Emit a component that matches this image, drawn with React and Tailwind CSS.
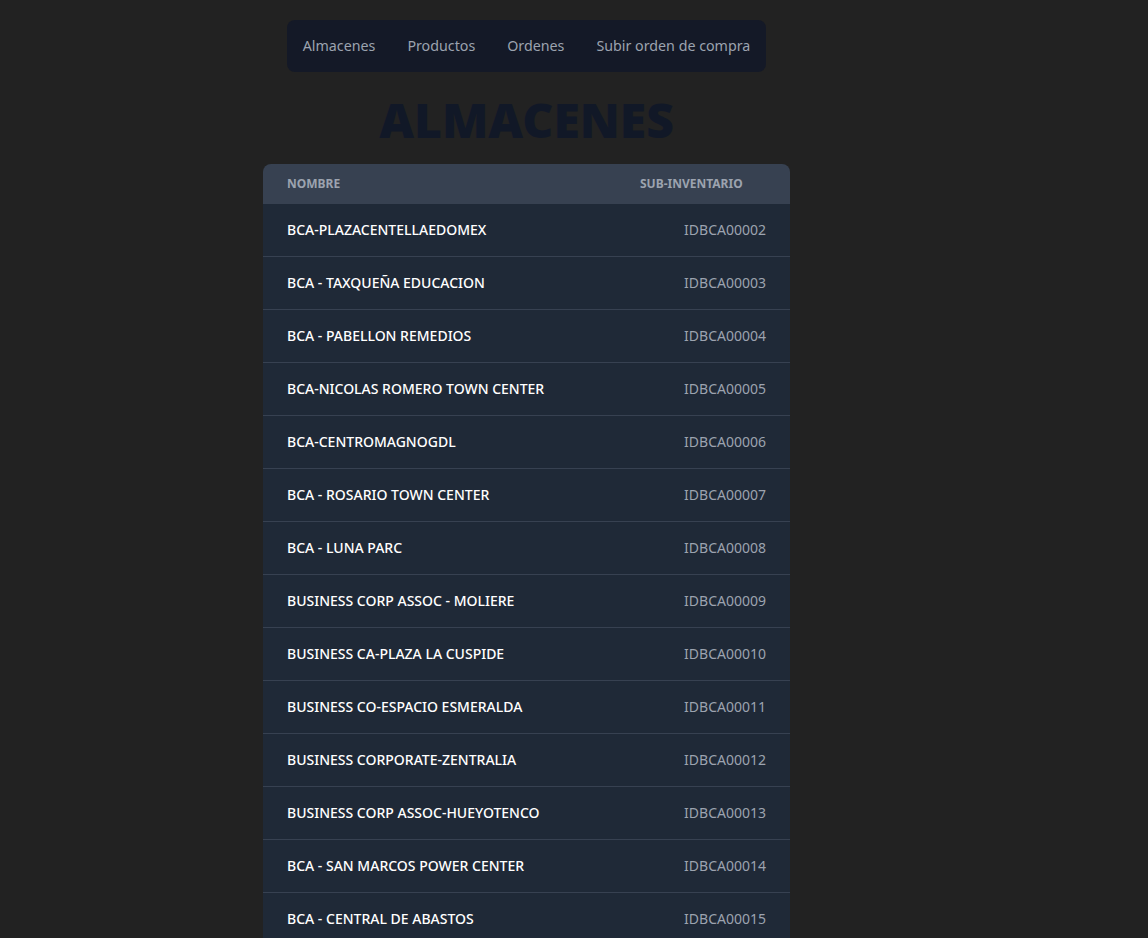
const almacenes = [
  ["BCA-PLAZACENTELLAEDOMEX", "IDBCA00002"],
  ["BCA - TAXQUEÑA EDUCACION", "IDBCA00003"],
  ["BCA - PABELLON REMEDIOS", "IDBCA00004"],
  ["BCA-NICOLAS ROMERO TOWN CENTER", "IDBCA00005"],
  ["BCA-CENTROMAGNOGDL", "IDBCA00006"],
  ["BCA - ROSARIO TOWN CENTER", "IDBCA00007"],
  ["BCA - LUNA PARC", "IDBCA00008"],
  ["BUSINESS CORP ASSOC - MOLIERE", "IDBCA00009"],
  ["BUSINESS CA-PLAZA LA CUSPIDE", "IDBCA00010"],
  ["BUSINESS CO-ESPACIO ESMERALDA", "IDBCA00011"],
  ["BUSINESS CORPORATE-ZENTRALIA", "IDBCA00012"],
  ["BUSINESS CORP ASSOC-HUEYOTENCO", "IDBCA00013"],
  ["BCA - SAN MARCOS POWER CENTER", "IDBCA00014"],
  ["BCA - CENTRAL DE ABASTOS", "IDBCA00015"],
  ["BCA - PLAZA ORIENTE", "IDBCA00016"],
];

const App = () => {
  return (
    <div
      className="min-h-screen bg-[#222222] flex flex-col items-center pt-5 pr-[95px]"
      style={{ fontFamily: '"Noto Sans", "Open Sans", sans-serif' }}
    >
      {/* Nav */}
      <nav className="bg-[#141927] rounded-lg px-4 flex gap-8 h-[52px] items-center">
        {["Almacenes", "Productos", "Ordenes", "Subir orden de compra"].map((item) => (
          <a key={item} href="#" className="text-[#9ca3af] text-[14.25px]">
            {item}
          </a>
        ))}
      </nav>

      {/* Title */}
      <h1 className="text-[#111827] text-5xl font-black mt-6 mb-5 leading-none">
        ALMACENES
      </h1>

      {/* Table */}
      <div className="w-[527px] rounded-lg overflow-hidden">
        <table className="w-full text-sm">
          <thead className="bg-[#374151]">
            <tr className="h-10">
              <th className="px-6 text-left text-xs font-bold text-[#9ca3af] uppercase">Nombre</th>
              <th className="px-6 text-left text-xs font-bold text-[#9ca3af] uppercase w-[174px]">
                Sub-inventario
              </th>
            </tr>
          </thead>
          <tbody>
            {almacenes.map(([nombre, id]) => (
              <tr key={id} className="bg-[#1f2937] border-b border-[#374151]">
                <td className="px-6 py-4 font-medium text-white whitespace-nowrap">{nombre}</td>
                <td className="px-6 py-4 text-right text-[#9ca3af]">{id}</td>
              </tr>
            ))}
          </tbody>
        </table>
      </div>
    </div>
  );
};

export default App;
